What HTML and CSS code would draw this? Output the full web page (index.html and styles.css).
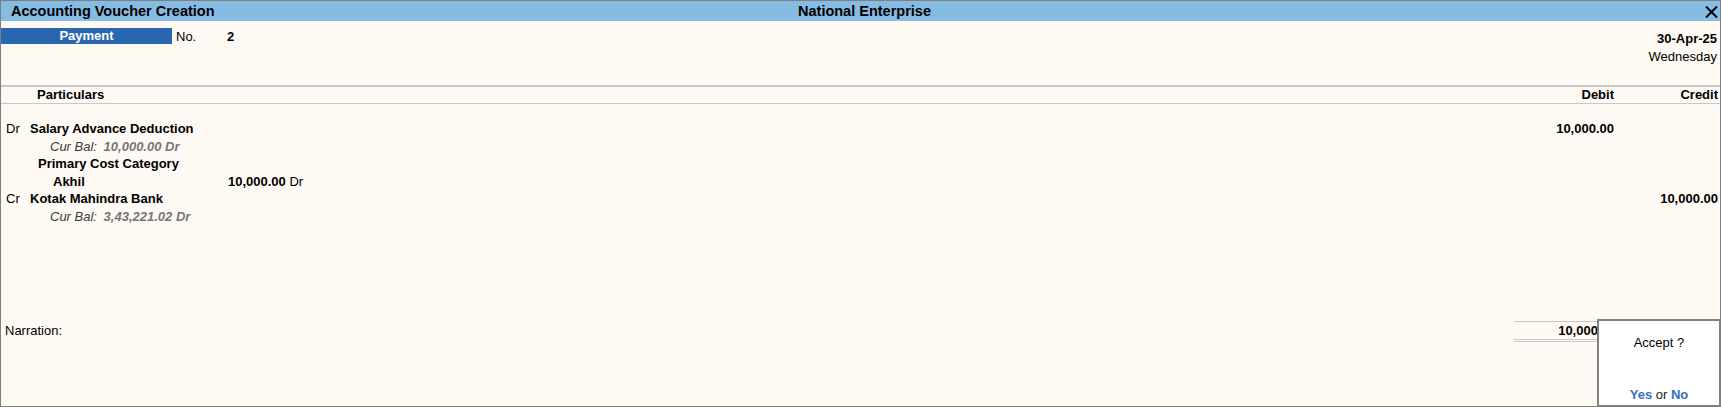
FILE: index.html
```html
<!DOCTYPE html>
<html lang="en">
<head>
    <meta charset="UTF-8">
    <title>Accounting Voucher Creation</title>
    <link rel="stylesheet" href="styles.css">
</head>
<body>
    <div class="window">
        <div class="titlebar">
            <span class="title-left">Accounting Voucher Creation</span>
            <span class="title-center">National Enterprise</span>
            <span class="title-right">
                <svg class="close" width="13" height="12" viewBox="0 0 13 12">
                    <path d="M1 0.5 L12 11.5 M12 0.5 L1 11.5" stroke="#000" stroke-width="2" fill="none"/>
                </svg>
            </span>
        </div>

        <div class="voucher-head">
            <div class="voucher-type">
                <span class="type-box">Payment</span>
                <span class="no-label">No.</span>
                <span class="no-value">2</span>
            </div>
            <div class="voucher-date">
                <div class="date">30-Apr-25</div>
                <div class="weekday">Wednesday</div>
            </div>
        </div>

        <div class="col-head">
            <span class="col-particulars">Particulars</span>
            <span class="col-amt">Debit</span>
            <span class="col-amt">Credit</span>
        </div>

        <div class="entries">
            <div class="row">
                <span class="drcr">Dr</span>
                <span class="ledger">Salary Advance Deduction</span>
                <span class="amt">10,000.00</span>
                <span class="amt"></span>
            </div>
            <div class="row">
                <span class="drcr"></span>
                <span class="curbal"><i>Cur Bal:</i> <b>10,000.00 Dr</b></span>
            </div>
            <div class="row">
                <span class="drcr"></span>
                <span class="cost-cat">Primary Cost Category</span>
            </div>
            <div class="row">
                <span class="drcr"></span>
                <span class="cost-centre">Akhil</span>
                <span class="cc-amt"><b>10,000.00</b> Dr</span>
            </div>
            <div class="row">
                <span class="drcr">Cr</span>
                <span class="ledger">Kotak Mahindra Bank</span>
                <span class="amt"></span>
                <span class="amt">10,000.00</span>
            </div>
            <div class="row">
                <span class="drcr"></span>
                <span class="curbal"><i>Cur Bal:</i> <b>3,43,221.02 Dr</b></span>
            </div>
        </div>

        <div class="footer">
            <span class="narration">Narration:</span>
            <div class="totals">
                <span class="amt">10,000.00</span>
                <span class="amt">10,000.00</span>
            </div>
        </div>

        <div class="accept">
            <div class="accept-q">Accept ?</div>
            <div class="accept-opts"><span class="opt">Yes</span> or <span class="opt">No</span></div>
        </div>
    </div>
</body>
</html>
```

FILE: styles.css
```css
html, body {
    margin: 0;
    padding: 0;
}

body {
    font-family: "Liberation Sans", Arial, sans-serif;
    font-size: 13px;
    color: #000;
    width: 1721px;
    height: 407px;
    overflow: hidden;
}

.window {
    position: relative;
    box-sizing: border-box;
    width: 1721px;
    height: 407px;
    border: 1px solid #7f7f7f;
    background: #fef9f3;
    display: flex;
    flex-direction: column;
}

/* title bar */
.titlebar {
    height: 20px;
    background: #86bbe4;
    display: grid;
    grid-template-columns: 1fr auto 1fr;
    align-items: center;
    padding: 0 2px 0 10px;
    font-size: 14.5px;
    font-weight: bold;
}

.title-center {
    text-align: center;
}

.title-right {
    display: flex;
    justify-content: flex-end;
    padding-top: 1px;
}

/* voucher head */
.voucher-head {
    height: 64px;
    display: flex;
    justify-content: space-between;
}

.voucher-type {
    display: flex;
    align-items: center;
    height: 16px;
    margin-top: 7px;
}

.type-box {
    width: 171px;
    height: 16px;
    line-height: 16px;
    background: #2a67b1;
    color: #fff;
    font-weight: bold;
    text-align: center;
}

.no-label {
    margin-left: 4px;
    width: 51px;
}

.no-value {
    font-weight: bold;
}

.voucher-date {
    text-align: right;
    padding: 9px 3px 0 0;
    line-height: 18px;
}

.date {
    font-weight: bold;
}

/* column header */
.col-head {
    display: flex;
    height: 16px;
    line-height: 16px;
    border-top: 2px solid #c8c8c8;
    border-bottom: 1px solid #c8c8c8;
    font-weight: bold;
    padding-right: 2px;
}

.col-particulars {
    flex: 1;
    padding-left: 36px;
}

.col-amt,
.amt {
    width: 104px;
    text-align: right;
}

/* entries */
.entries {
    flex: 1;
    padding: 16px 2px 0 5px;
    line-height: 17.6px;
}

.row {
    display: flex;
}

.drcr {
    width: 24px;
}

.ledger {
    flex: 1;
    font-weight: bold;
}

.row .amt {
    font-weight: bold;
}

.curbal {
    padding-left: 20px;
    font-style: italic;
}

.curbal i {
    color: #3a3a3a;
}

.curbal b {
    color: #767676;
    margin-left: 3px;
}

.cost-cat {
    padding-left: 8px;
    font-weight: bold;
}

.cost-centre {
    padding-left: 23px;
    width: 175px;
    font-weight: bold;
}

/* footer */
.footer {
    height: 85px;
    display: flex;
    justify-content: space-between;
    align-items: flex-start;
    padding: 0 2px 0 4px;
}

.narration {
    margin-top: 1px;
    line-height: 18px;
}

.totals {
    display: flex;
    width: 204px;
    height: 17px;
    line-height: 18px;
    border-top: 1px solid #c8c8c8;
    border-bottom: 3px double #c8c8c8;
    font-weight: bold;
}

.totals .amt {
    width: 102px;
}

.totals .amt + .amt {
    width: 102px;
}

/* accept prompt */
.accept {
    position: absolute;
    left: 1596px;
    top: 318px;
    right: 0;
    bottom: 0;
    background: #fff;
    border: 2px solid #808080;
    border-right-width: 1px;
    border-bottom-width: 1px;
    text-align: center;
}

.accept-q {
    margin-top: 13px;
    line-height: 18px;
}

.accept-opts {
    margin-top: 34px;
    line-height: 18px;
    color: #222;
}

.opt {
    color: #3570c0;
    font-weight: bold;
}
```
